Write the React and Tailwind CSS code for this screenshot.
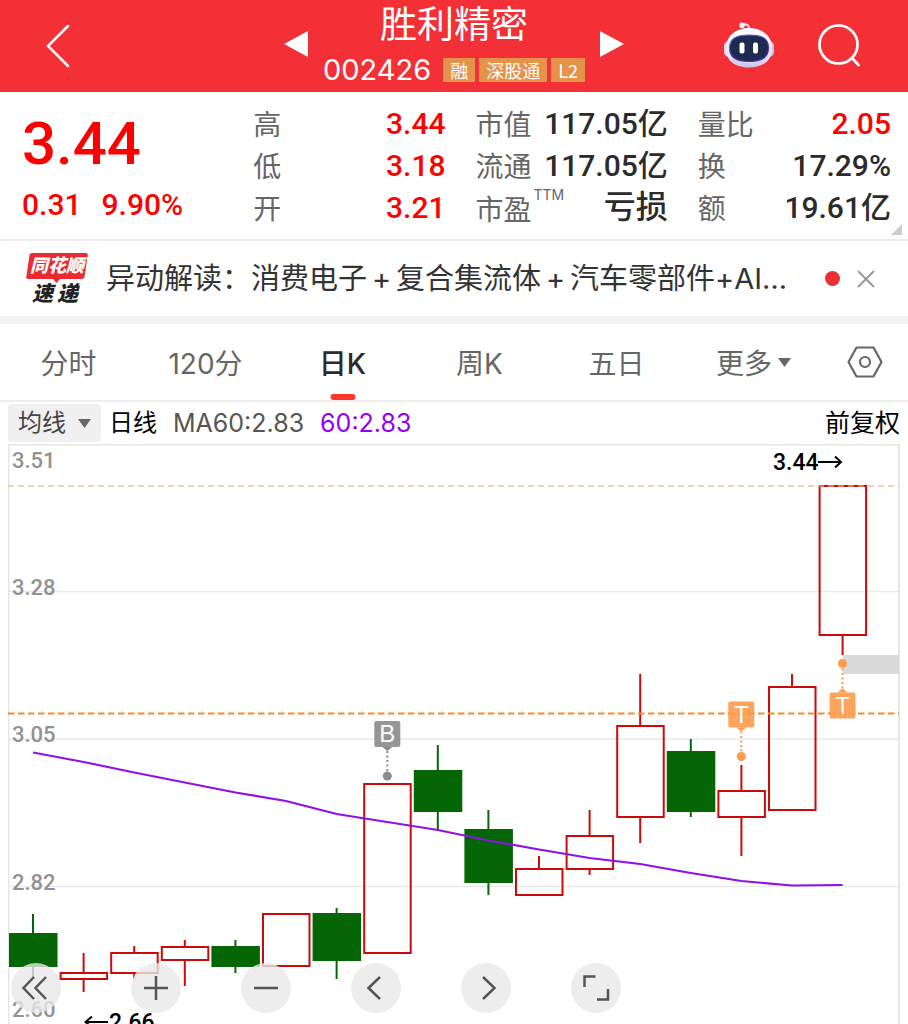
const SANS = "font-['Noto_Sans_CJK_SC',sans-serif]";
const NUM = "font-['Roboto','Noto_Sans_CJK_SC',sans-serif]";
const MIX = "font-['Inter','Noto_Sans_CJK_SC',sans-serif]";

const CANDLES = [
  { up: false, open: 933, close: 967, high: 914, low: 978 },
  { up: true, open: 972, close: 980, high: 953, low: 992 },
  { up: true, open: 952, close: 974, high: 946, low: 979 },
  { up: true, open: 946, close: 961, high: 940, low: 986 },
  { up: false, open: 946, close: 967, high: 940, low: 973 },
  { up: true, open: 913, close: 967, high: 913, low: 967 },
  { up: false, open: 913, close: 961, high: 908, low: 979 },
  { up: true, open: 783, close: 954, high: 783, low: 954 },
  { up: false, open: 770, close: 812, high: 745, low: 829 },
  { up: false, open: 829, close: 883, high: 810, low: 895 },
  { up: true, open: 868, close: 896, high: 856, low: 896 },
  { up: true, open: 835, close: 870, high: 810, low: 875 },
  { up: true, open: 725, close: 818, high: 674, low: 843 },
  { up: false, open: 751, close: 812, high: 739, low: 817 },
  { up: true, open: 790, close: 818, high: 765, low: 856 },
  { up: true, open: 686, close: 811, high: 674, low: 811 },
  { up: true, open: 485, close: 636, high: 485, low: 655 },
];

const MA60 = [752.5, 762, 772.5, 782.5, 792.5, 801, 814, 822, 830, 840.5, 849.5, 858, 864, 873, 881, 885.5, 885];
const xAt = (i) => 33 + i * 50.6;

function Candle({ x, c }) {
  const color = c.up ? "#cc0a0a" : "#046604";
  return (
    <g stroke={color} strokeWidth="2">
      {c.high < c.open && <line x1={x} x2={x} y1={c.high} y2={c.open} />}
      {c.low > c.close && <line x1={x} x2={x} y1={c.close} y2={c.low} />}
      <rect x={x - 23} y={c.open + 1} width="46.5" height={c.close - c.open - 2} fill={c.up ? "none" : color} />
    </g>
  );
}

function Marker({ x, y, dot, color, label }) {
  const below = dot > y;
  const edge = below ? y + 13 : y - 13;
  const tip = below ? edge + 4 : edge - 4;
  return (
    <g>
      <line x1={x} x2={x} y1={tip} y2={dot} stroke={color} strokeWidth="2" strokeDasharray="2 2.5" />
      <circle cx={x} cy={dot} r="4.5" fill={color} />
      <path d={`M${x - 5} ${edge}L${x} ${tip}L${x + 5} ${edge}Z`} fill={color} />
      <rect x={x - 13} y={y - 13} width="26" height="26" rx="2" fill={color} fillOpacity="0.9" />
      <text x={x} y={y + 8} textAnchor="middle" fontSize="24" fontFamily="Liberation Sans, sans-serif" fill="#fff">{label}</text>
    </g>
  );
}

function Chart() {
  return (
    <svg viewBox="8 444 892 580" className="block h-auto w-full" role="img" aria-label="日K">
      <g stroke="#e9e9e9" strokeWidth="1.5">
        <line x1="8" x2="899" y1="591.5" y2="591.5" />
        <line x1="8" x2="899" y1="739" y2="739" />
        <line x1="8" x2="899" y1="886.5" y2="886.5" />
      </g>
      <path d="M8.5 1030V444.500H899V1030" fill="none" stroke="#e6e6e6" strokeWidth="2" />
      <rect x="843" y="655" width="56" height="19" fill="#dadada" />
      {CANDLES.map((c, i) => <Candle key={i} x={xAt(i)} c={c} />)}
      <line x1="8" x2="899" y1="486" y2="486" stroke="#dcb98a" strokeOpacity="0.8" strokeWidth="1.5" strokeDasharray="6 4" />
      <line x1="8" x2="899" y1="713.500" y2="713.500" stroke="#f58a33" strokeWidth="2" strokeDasharray="6.500 3.500" />
      <polyline points={MA60.map((y, i) => `${xAt(i)},${y}`).join(" ")} fill="none" stroke="#9010e8" strokeWidth="2.2" />
      <g fontFamily="Roboto, sans-serif" fontSize="22" fontWeight="500" fill="#929292">
        <text x="12" y="468">3.51</text>
        <text x="12" y="595">3.28</text>
        <text x="12" y="742">3.05</text>
        <text x="12" y="890">2.82</text>
        <text x="12" y="1017">2.60</text>
      </g>
      <g fontFamily="Roboto, sans-serif" fontSize="23" fontWeight="500" fill="#000">
        <text x="773" y="470">3.44</text>
        <text x="109" y="1030">2.66</text>
      </g>
      <g fill="none" stroke="#000" strokeWidth="2">
        <path d="M818 462H841M835 456.500L841 462L835 467.500" />
        <path d="M108 1022H85.500M92 1016.500L85.500 1022L92 1027.500" />
      </g>
      <Marker x={387.300} y={734} dot={776} color="#8b8b8b" label="B" />
      <Marker x={741.300} y={714.500} dot={756.500} color="#fd9a4b" label="T" />
      <Marker x={842.500} y={705.500} dot={663.500} color="#fd9a4b" label="T" />
    </svg>
  );
}

function Robot() {
  return (
    <svg width="52" height="48" viewBox="0 0 52 48" aria-hidden="true">
      <defs>
        <linearGradient id="shell" x1="0" y1="0" x2="0" y2="1">
          <stop offset="0" stopColor="#fff" />
          <stop offset="0.7" stopColor="#e9e4f8" />
          <stop offset="1" stopColor="#c9c3ea" />
        </linearGradient>
        <linearGradient id="rim" x1="0" y1="0" x2="1" y2="1">
          <stop offset="0" stopColor="#50a8e8" />
          <stop offset="0.4" stopColor="#5a3bb0" />
          <stop offset="1" stopColor="#4a2bc0" />
        </linearGradient>
      </defs>
      <path d="M19 2.500Q26 1 27 8" fill="none" stroke="#e9e2f5" strokeWidth="2" />
      <circle cx="19" cy="3.200" r="2.800" fill="#f7f3fd" />
      <rect x="1" y="19" width="10" height="16" rx="5" fill="#dcd7f0" />
      <rect x="41" y="19" width="10" height="16" rx="5" fill="#cbc4ea" />
      <path d="M26 6C39 6 49 13.500 49 26.500C49 39.500 39 45.500 26 45.500C13 45.500 3 39.500 3 26.500C3 13.500 13 6 26 6Z" fill="url(#shell)" />
      <path d="M26 13C40 13 45.500 17 45.500 26C45.500 35.500 39 39.500 26 39.500C13 39.500 6.500 35.500 6.500 26C6.500 17 12 13 26 13Z" fill="#1f2a50" stroke="url(#rim)" strokeWidth="1.200" />
      <rect x="16.500" y="20.500" width="5" height="11" rx="2" fill="#fff" />
      <rect x="30" y="20.500" width="5" height="11" rx="2" fill="#fff" />
    </svg>
  );
}

function Header() {
  const tag = "flex h-6 items-center bg-[#e5934a] px-[7px] text-[18px] leading-6";
  return (
    <header className="grid h-[92px] grid-cols-[1fr_auto_1fr] items-center bg-[#f23035] text-white">
      <button aria-label="返回" className="ml-11 w-fit">
        <svg width="28" height="44" viewBox="0 0 28 44" fill="none" stroke="#fff" strokeWidth="2.500" strokeLinecap="round">
          <path d="M24 2L4 22L24 42" />
        </svg>
      </button>
      <div className="flex items-start gap-[14px]">
        <button aria-label="上一只" className="mt-[30px]">
          <svg width="25" height="28" viewBox="0 0 25 28"><path d="M0 14L24 1V27Z" fill="#fff" /></svg>
        </button>
        <div className="flex flex-col items-center">
          <h1 className="h-12 text-[37px] font-normal leading-[44px]">胜利精密</h1>
          <div className="flex h-11 items-center gap-1">
            <span className="mr-2 font-['Inter',sans-serif] text-[29px] leading-8">002426</span>
            <span className={tag}>融</span>
            <span className={tag}>深股通</span>
            <span className={tag}>L2</span>
          </div>
        </div>
        <button aria-label="下一只" className="mt-[30px]">
          <svg width="25" height="28" viewBox="0 0 25 28"><path d="M25 14L1 1V27Z" fill="#fff" /></svg>
        </button>
      </div>
      <div className="mr-[46px] flex items-center justify-end gap-[43px]">
        <button aria-label="助手"><Robot /></button>
        <button aria-label="搜索">
          <svg width="44" height="44" viewBox="0 0 44 44" fill="none" stroke="#fff" strokeWidth="2.700" strokeLinecap="round">
            <circle cx="20.500" cy="20.500" r="19" />
            <path d="M34 34L40.500 41" />
          </svg>
        </button>
      </div>
    </header>
  );
}

function Row({ label, sup, value, red }) {
  return (
    <div className="flex h-[42px] items-center justify-between">
      <dt className={`flex text-[28px] leading-9 text-[#666] ${sup ? "" : "pb-0.5"}`}>
        {label}
        {sup && <sup className="mt-1 pl-0.5 font-['Inter',sans-serif] text-[14px] leading-4">{sup}</sup>}
      </dt>
      <dd className={`${NUM} font-medium leading-10 ${sup ? "pb-0.5 text-[32px]" : "text-[30px]"} ${red ? "text-[#ff0000]" : "text-[#2b2b2b]"}`}>{value}</dd>
    </div>
  );
}

function Quote() {
  return (
    <section className="relative grid h-[149px] grid-cols-[201fr_192fr_192fr_193fr] gap-x-[30px] border-b-2 border-[#ececec] pl-[22px] pr-[17px] pt-[11px]">
      <div className={`${NUM} text-[#ff0000]`}>
        <div className="mt-2 text-[60px] font-medium leading-[66px]">3.44</div>
        <div className="mt-2 flex gap-5 text-[30px] font-medium leading-10">
          <span>0.31</span>
          <span>9.90%</span>
        </div>
      </div>
      <dl>
        <Row label="高" value="3.44" red />
        <Row label="低" value="3.18" red />
        <Row label="开" value="3.21" red />
      </dl>
      <dl>
        <Row label="市值" value="117.05亿" />
        <Row label="流通" value="117.05亿" />
        <Row label="市盈" sup="TTM" value="亏损" />
      </dl>
      <dl>
        <Row label="量比" value="2.05" red />
        <Row label="换" value="17.29%" />
        <Row label="额" value="19.61亿" />
      </dl>
      <svg className="absolute bottom-1 right-1.5" width="11" height="11" viewBox="0 0 11 11" aria-hidden="true">
        <path d="M11 0V11H0Z" fill="#ccc" />
      </svg>
    </section>
  );
}

function NewsLogo() {
  return (
    <svg width="62" height="52" viewBox="0 0 62 52" className="shrink-0 overflow-visible" role="img" aria-label="同花顺速递">
      <path d="M6 0H60Q62 0 61.700 2L58.500 24Q58 26 56 26H34L30.500 30L27 26H2Q0 26 0.300 24L3.500 2Q4 0 6 0Z" fill="#ea2b2f" />
      <g fontFamily="Noto Sans CJK SC, sans-serif" fontWeight="900" fontStyle="italic">
        <text x="4" y="19" fontSize="18" fill="#fff">同花顺</text>
        <text x="6" y="48" fontSize="21" fill="#222">速</text>
        <text x="31" y="48" fontSize="21" fill="#222">递</text>
      </g>
    </svg>
  );
}

function News() {
  const plus = <span className="inline-block w-[29px] text-center">+</span>;
  return (
    <section className="flex h-[83px] items-center border-b-8 border-[#f4f4f4] pl-[26px] pr-8">
      <NewsLogo />
      <a href="#news" className={`${MIX} ml-[18px] min-w-0 flex-1 truncate text-[29px] leading-10 text-[#333]`}>
        异动解读：消费电子{plus}复合集流体{plus}汽车零部件+AI…
      </a>
      <span className="ml-6 size-[15px] shrink-0 rounded-full bg-[#ec2f33]" />
      <button aria-label="关闭" className="ml-4 shrink-0">
        <svg width="20" height="20" viewBox="0 0 20 20" fill="none" stroke="#999" strokeWidth="2"><path d="M2 2L18 18M18 2L2 18" /></svg>
      </button>
    </section>
  );
}

function Tabs() {
  const tabs = ["分时", "120分", "日K", "周K", "五日"];
  return (
    <nav className={`${MIX} flex h-[78px] border-b-2 border-[#ededed] text-[28px] text-[#666]`}>
      {tabs.map((t) => (
        <button key={t} className={t === "日K" ? "relative flex-1 pt-1 font-medium text-[#2b2b2b]" : "flex-1 pt-1"}>
          {t}
          {t === "日K" && <span className="absolute bottom-0 left-1/2 h-1.5 w-[25px] -translate-x-1/2 rounded-full bg-[#ff372f]" />}
        </button>
      ))}
      <button className="flex flex-1 items-center justify-center gap-1.5">
        <span className="pt-1">更多</span>
        <svg width="13" height="9" viewBox="0 0 13 9"><path d="M0 0H13L6.500 9Z" fill="#666" /></svg>
      </button>
      <button aria-label="设置" className="flex w-[86px] items-center justify-center">
        <svg width="36" height="32" viewBox="0 0 36 32" fill="none" stroke="#666" strokeWidth="2.200">
          <path d="M9.500 1.500H26.500L34.500 16L26.500 30.500H9.500L1.500 16Z" strokeLinejoin="round" />
          <circle cx="18" cy="16" r="5" />
        </svg>
      </button>
    </nav>
  );
}

function Indicators() {
  return (
    <div className="flex h-[42px] items-center px-2 text-[24px] leading-8">
      <button className="flex h-[38px] items-center gap-3 rounded bg-[#f0f0f0] px-2.5 text-[#444]">
        <span className="pb-1">均线</span>
        <svg width="13" height="9" viewBox="0 0 13 9"><path d="M0 0H13L6.500 9Z" fill="#666" /></svg>
      </button>
      <span className="ml-2 pb-1 text-black">日线</span>
      <span className="ml-4 font-['Inter',sans-serif] text-[25px] text-[#555]">MA60:2.83</span>
      <span className="ml-4 font-['Inter',sans-serif] text-[25px] text-[#9400f5]">60:2.83</span>
      <span className="ml-auto pb-1 text-[25px] text-black">前复权</span>
    </div>
  );
}

const TOOLS = [
  { label: "最左", d: "M23 14L12.500 25L23 36M35 14L24.500 25L35 36" },
  { label: "放大", d: "M25 13V37M13 25H37" },
  { label: "缩小", d: "M13 25H37" },
  { label: "左移", d: "M29 14L17.500 25L29 36" },
  { label: "右移", d: "M22 14L33.500 25L22 36" },
  { label: "全屏", d: "M13.500 24V13.500H24.500M37 26V36.500H26" },
];

function Toolbar() {
  return (
    <div className="absolute bottom-[11px] left-[11px] flex gap-[60px]">
      {TOOLS.map((t, i) => (
        <button key={t.label} aria-label={t.label} className={`size-[50px] rounded-full bg-[#e8e8e8]/80 ${i === 0 ? "mr-2.5" : ""}`}>
          <svg width="50" height="50" viewBox="0 0 50 50" fill="none" stroke="#555" strokeWidth="2.500"><path d={t.d} /></svg>
        </button>
      ))}
    </div>
  );
}

export default function App() {
  return (
    <div className={`${SANS} flex h-screen flex-col overflow-hidden bg-white`}>
      <Header />
      <Quote />
      <News />
      <Tabs />
      <Indicators />
      <main className="relative min-h-0 flex-1 overflow-hidden">
        <div className="px-2">
          <Chart />
        </div>
        <Toolbar />
      </main>
    </div>
  );
}
